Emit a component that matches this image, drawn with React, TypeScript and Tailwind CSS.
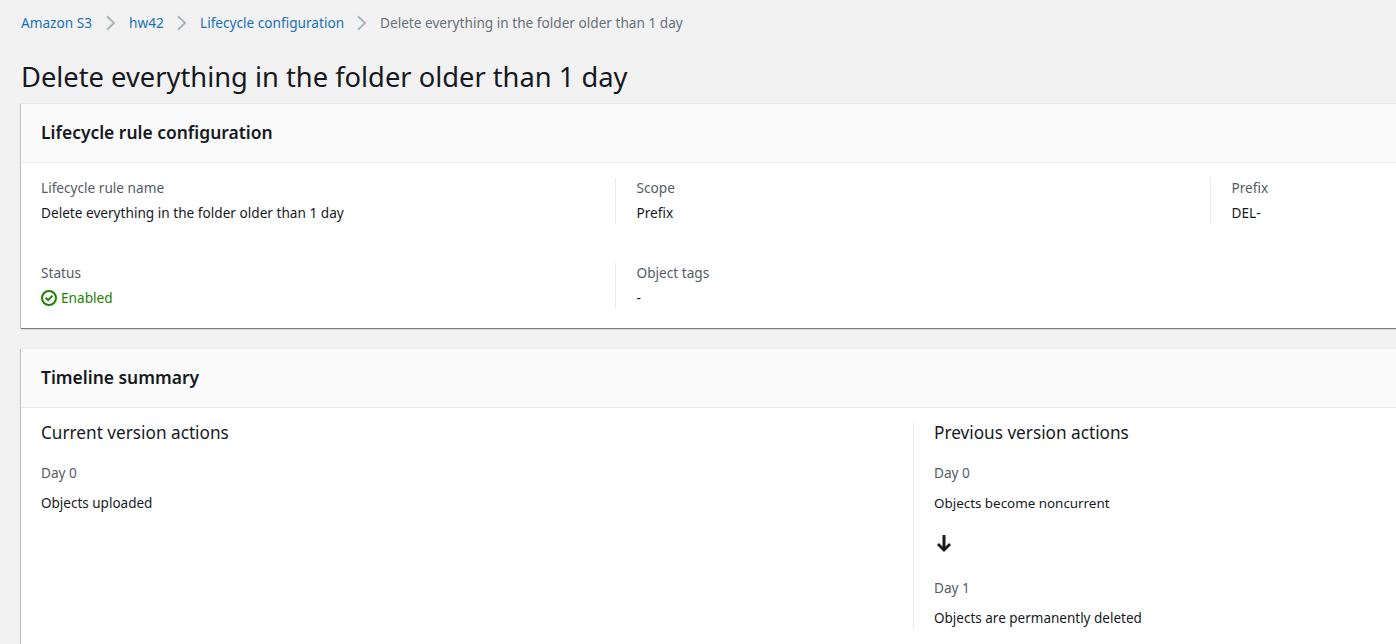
import React from "react";

function Separator() {
  return (
    <svg className="ml-[11px] mr-2.5 h-4 w-4 shrink-0" viewBox="0 0 16 16" fill="none" stroke="#aab7b8" strokeWidth="2">
      <path d="M4 1.2L11 8L4 14.8" />
    </svg>
  );
}

function StatusIcon() {
  return (
    <svg className="mr-1 h-4 w-4 shrink-0" viewBox="0 0 16 16" fill="none" stroke="#1d8102" strokeWidth="2">
      <circle cx="8" cy="8" r="7" />
      <path d="M4.6 7.8L7.2 10.2L11.4 5.6" />
    </svg>
  );
}

function DownArrow() {
  return (
    <svg className="ml-0.5 h-[18px] w-4" viewBox="0 0 16 18" fill="none" stroke="#16191f" strokeWidth="3">
      <path d="M8 0V15" />
      <path d="M2 9L8 15L14 9" strokeWidth="2.8" />
    </svg>
  );
}

function Card({ title, children, className }: { title: string; children: React.ReactNode; className: string }) {
  return (
    <section className={`w-[1785px] border-t border-[#eaeaea] bg-white shadow-[0_1px_1px_0_rgba(0,0,0,0.3),1px_1px_1px_0_rgba(0,0,0,0.15),-1px_1px_1px_0_rgba(0,0,0,0.15)] ${className}`}>
      <header className="flex h-[59px] items-center border-b border-[#eaeaea] bg-[#fafafa] px-5 pb-0.5">
        <h2 className="text-[17.45px] font-semibold leading-[22px]">{title}</h2>
      </header>
      {children}
    </section>
  );
}

function Field({ label, children, divided = false }: { label: string; children: React.ReactNode; divided?: boolean }) {
  return (
    <div className={`h-[46px] shrink-0 ${divided ? "w-[595px] border-l border-[#eaeaea] pl-[20.5px]" : "w-[594px] pl-5"}`}>
      <div className="h-[25px] leading-5 text-[#545b64]">{label}</div>
      <div className="flex h-5 items-center leading-5">{children}</div>
    </div>
  );
}

export default function App() {
  return (
    <div className="h-[644px] w-full overflow-hidden bg-[#f2f2f2] pl-[21px] font-['Noto_Sans',sans-serif] text-[13.64px] text-[#16191f]">
      <nav className="flex h-[46px] items-center whitespace-nowrap leading-5 text-[#1a70b5]">
        <a className="w-[71px]">Amazon S3</a>
        <Separator />
        <a className="w-[34px]">hw42</a>
        <Separator />
        <a className="w-[143px]">Lifecycle configuration</a>
        <Separator />
        <span className="text-[#687078]">Delete everything in the folder older than 1 day</span>
      </nav>
      <h1 className="flex h-[57px] items-center whitespace-nowrap pt-[5px] text-[27.3px] leading-9">
        Delete everything in the folder older than 1 day
      </h1>

      <Card title="Lifecycle rule configuration" className="h-[225px]">
        <div className="flex flex-col gap-[39px] pt-[15px]">
          <div className="flex">
            <Field label="Lifecycle rule name">Delete everything in the folder older than 1 day</Field>
            <Field label="Scope" divided>Prefix</Field>
            <Field label="Prefix" divided>DEL-</Field>
          </div>
          <div className="flex">
            <Field label="Status">
              <StatusIcon />
              <span className="text-[#1d8102]">Enabled</span>
            </Field>
            <Field label="Object tags" divided>-</Field>
          </div>
        </div>
      </Card>

      <Card title="Timeline summary" className="mt-5 h-[320px]">
        <div className="flex pt-[15px] leading-5">
          <div className="w-[892px] pl-5">
            <h3 className="text-[17.2px] leading-5">Current version actions</h3>
            <div className="mt-5 text-[#545b64]">Day 0</div>
            <div className="mt-2.5 text-[13.5px]">Objects uploaded</div>
          </div>
          <div className="h-[206px] w-[893px] border-l border-[#eaeaea] pl-5">
            <h3 className="text-[17.2px] leading-5">Previous version actions</h3>
            <div className="mt-5 text-[#545b64]">Day 0</div>
            <div className="mt-2.5 text-[13.4px]">Objects become noncurrent</div>
            <div className="flex h-[65px] items-center pb-[3px]">
              <DownArrow />
            </div>
            <div className="text-[#545b64]">Day 1</div>
            <div className="mt-2.5 text-[13.5px]">Objects are permanently deleted</div>
          </div>
        </div>
      </Card>
    </div>
  );
}
